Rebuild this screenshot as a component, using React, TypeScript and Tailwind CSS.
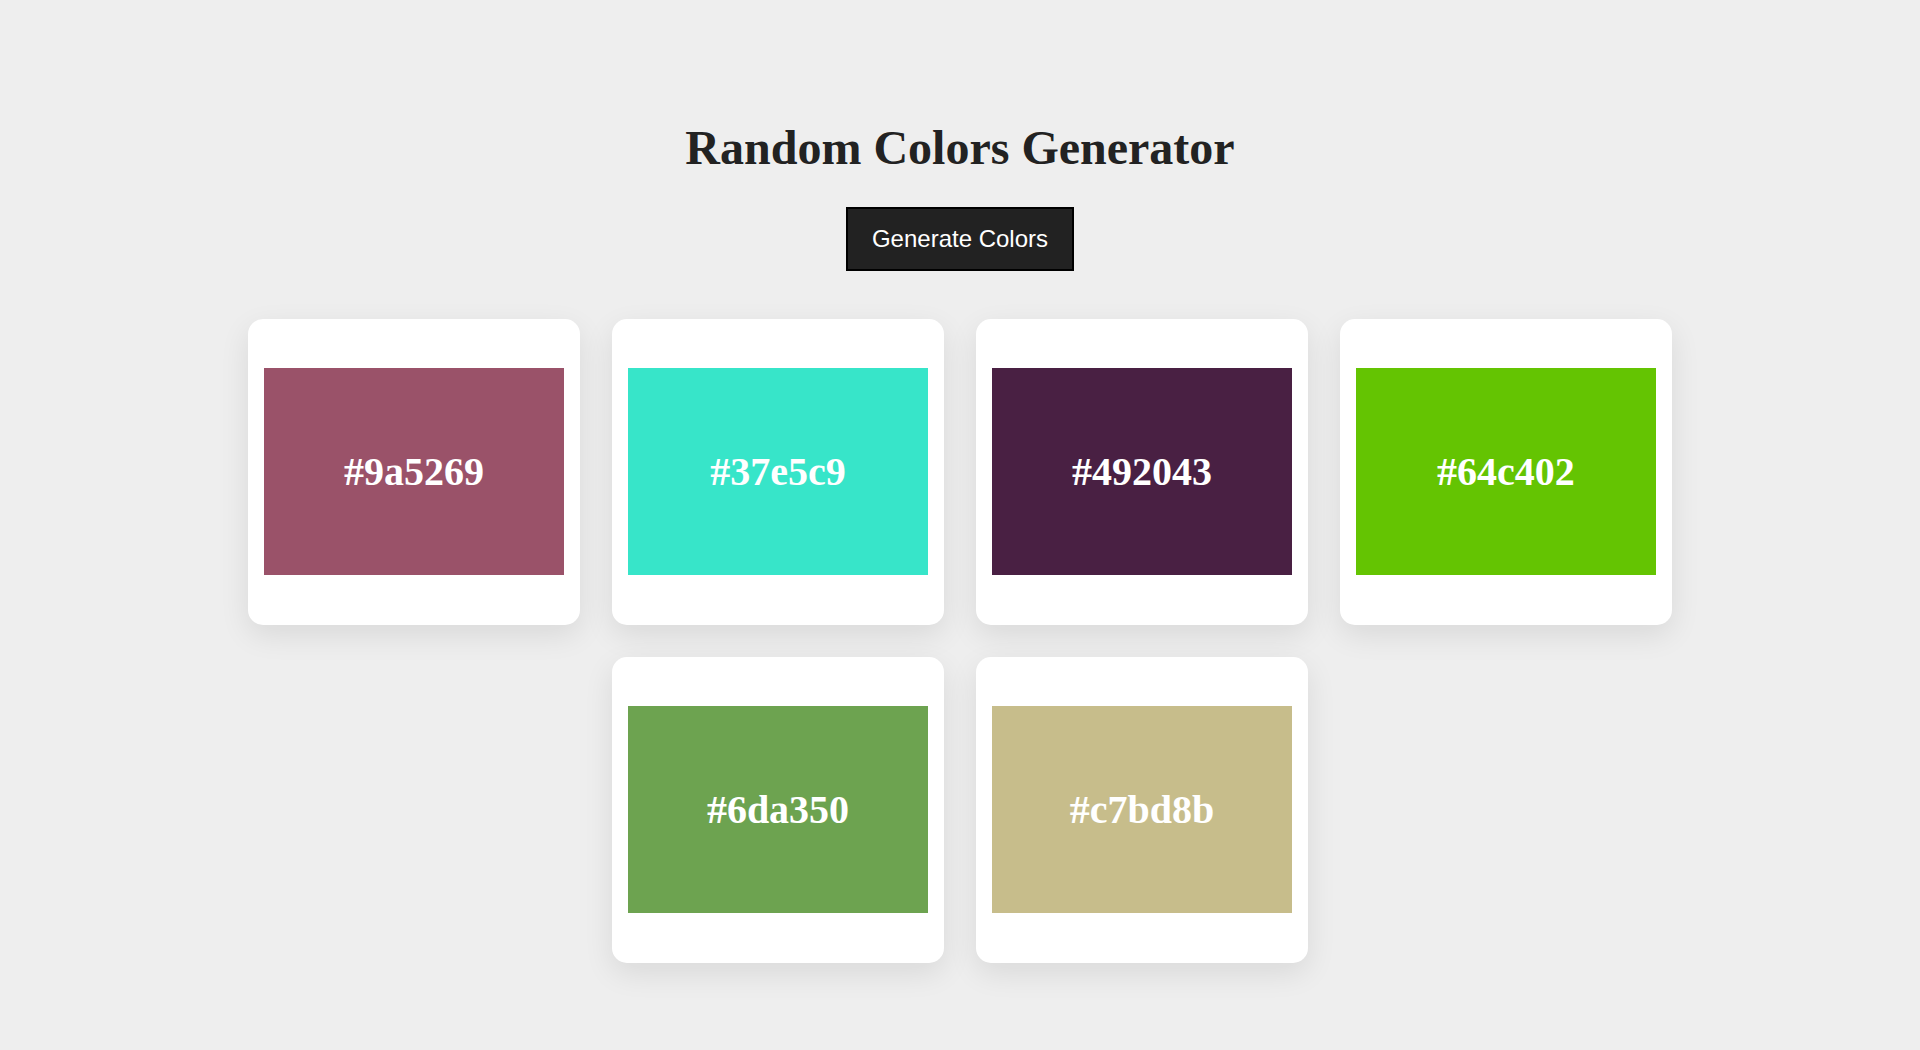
const colors = ["#9a5269", "#37e5c9", "#492043", "#64c402", "#6da350", "#c7bd8b"];

function Swatch({ hex }: { hex: string }) {
  return (
    <div className="w-[332px] rounded-[15px] bg-white px-4 pt-[49px] pb-[50px] shadow-[0_10px_30px_rgba(0,0,0,0.09)]">
      <div
        className="flex h-[207px] items-center justify-center"
        style={{ backgroundColor: hex }}
      >
        <span className="font-['Liberation_Serif','Times_New_Roman',serif] text-[40px] font-bold text-white">
          {hex}
        </span>
      </div>
    </div>
  );
}

export default function App() {
  return (
    <div className="min-h-[1050px] w-full bg-[#eeeeee] pt-[112px]">
      <h1 className="text-center font-['Liberation_Serif','Times_New_Roman',serif] text-[48px] font-bold leading-normal text-[#222222]">
        Random Colors Generator
      </h1>
      <div className="mt-[23px] flex justify-center">
        <button className="flex h-[64px] w-[228px] items-center justify-center border-2 border-black bg-[#222222] font-['Liberation_Sans',Arial,sans-serif] text-[24px] text-white">
          Generate Colors
        </button>
      </div>
      <div className="mx-auto mt-[48px] flex w-[1440px] flex-wrap justify-center gap-8">
        {colors.map((c) => (
          <Swatch key={c} hex={c} />
        ))}
      </div>
    </div>
  );
}
